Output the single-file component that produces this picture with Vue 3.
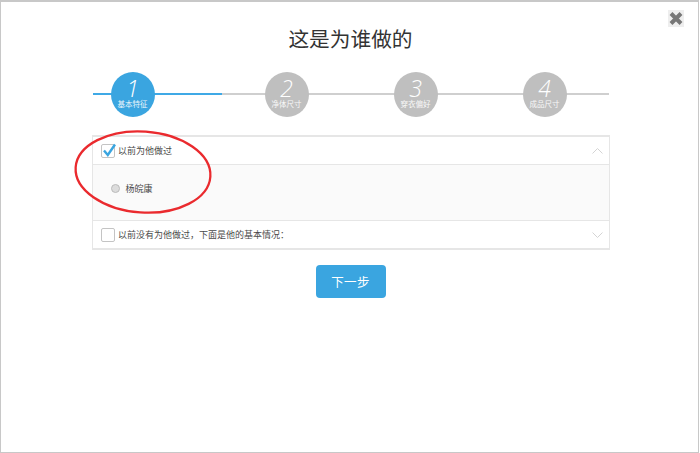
<script setup>
const steps = [
  { n: '1', label: '基本特征', done: true },
  { n: '2', label: '净体尺寸' },
  { n: '3', label: '穿衣偏好' },
  { n: '4', label: '成品尺寸' }
]
</script>

<template>
  <div class="frame">
    <button class="close" aria-label="关闭">
      <svg width="16" height="17" viewBox="0 0 16 17"><path d="M3 3.500 13 13.500M13 3.500 3 13.500" stroke="#777" stroke-width="4" /></svg>
    </button>
    <h1 class="title">这是为谁做的</h1>
    <div class="steps">
      <div v-for="s in steps" :key="s.n" class="step" :class="{ done: s.done }">
        <div class="circle">
          <span class="num">{{ s.n }}</span>
          <span class="label">{{ s.label }}</span>
        </div>
      </div>
    </div>
    <div class="panel">
      <div class="row">
        <span class="check">
          <svg width="16" height="15" viewBox="0 0 16 15"><path d="M3 7.500 6.800 12 14 1.500" fill="none" stroke="#3aa5e0" stroke-width="2.400" /></svg>
        </span>
        <span class="text">以前为他做过</span>
        <svg class="chev" width="11" height="6" viewBox="0 0 11 6"><path d="M.5 5.500 5.500.5l5 5" fill="none" stroke="#d4d4d4" /></svg>
      </div>
      <div class="body">
        <span class="radio"></span>
        <span class="text">杨皖康</span>
      </div>
      <div class="row last">
        <span class="check"></span>
        <span class="text">以前没有为他做过，下面是他的基本情况：</span>
        <svg class="chev" width="11" height="6" viewBox="0 0 11 6"><path d="M.5.5l5 5 5-5" fill="none" stroke="#d4d4d4" /></svg>
      </div>
    </div>
    <button class="next">下一步</button>
    <svg class="ring" width="144" height="90" viewBox="0 0 144 90">
      <ellipse cx="70" cy="44" rx="67.500" ry="40.500" transform="rotate(4 70 44)" fill="none" stroke="#ea2a2e" stroke-width="2.300" />
    </svg>
  </div>
</template>

<style>
html, body { margin: 0; background: #fff; }
</style>

<style scoped>
.frame {
  position: relative;
  box-sizing: border-box;
  width: 699px;
  height: 453px;
  background: #fff;
  border: 1px solid #c8c8c8;
  border-top-width: 2px;
  display: flex;
  flex-direction: column;
  align-items: center;
  font-family: "Noto Sans CJK SC", "Liberation Sans", sans-serif;
  color: #444;
}
.close {
  position: absolute;
  top: 8px;
  right: 14px;
  width: 16px;
  height: 17px;
  padding: 0;
  border: 0;
  background: #eee;
  line-height: 0;
}
.title {
  margin: 21px 0 0 2px;
  font-size: 20.700px;
  line-height: 30px;
  font-weight: 400;
  color: #333;
}
.steps {
  display: flex;
  margin-top: 19px;
  margin-left: 2px;
}
.step {
  width: 129px;
  height: 45px;
  position: relative;
  background: linear-gradient(#cfcfcf, #cfcfcf) 0 21px / 100% 2px no-repeat;
}
.step.done {
  background-image: linear-gradient(#3fa9e6, #3fa9e6);
}
.circle {
  position: absolute;
  left: 43px;
  top: 0;
  width: 44px;
  height: 45px;
  border-radius: 50%;
  background: #bfbfbf;
  color: #fff;
  display: flex;
  flex-direction: column;
  align-items: center;
}
.done .circle { left: 18px; background: #3aa5e0; }
.num {
  font-family: "Open Sans", "Liberation Sans", sans-serif;
  font-style: italic;
  font-weight: 300;
  font-size: 23px;
  line-height: 18px;
  margin-top: 7px;
}
.label {
  font-size: 7.500px;
  line-height: 8px;
  margin-top: 3px;
  white-space: nowrap;
  opacity: .9;
}
.panel {
  box-sizing: border-box;
  width: 518px;
  margin: 18px 0 0 2px;
  border: 1px solid #e6e6e6;
  border-top-width: 2px;
  border-bottom-width: 2px;
  font-size: 9px;
}
.row {
  display: flex;
  align-items: center;
  height: 27px;
  padding: 0 6px 0 8px;
  border-bottom: 1px solid #e6e6e6;
}
.row.last { border-bottom: 0; border-top: 1px solid #e6e6e6; }
.check {
  box-sizing: border-box;
  width: 14px;
  height: 14px;
  border: 1px solid #c4c4c4;
  border-radius: 2px;
  background: #fff;
  margin-right: 3.500px;
  line-height: 0;
}
.check svg { margin: -2px 0 0 -1px; }
.text { line-height: 14px; color: #4a4a4a; }
.chev { margin-left: auto; }
.body {
  height: 55px;
  display: flex;
  align-items: center;
  padding: 0 0 8px 18.500px;
  background: #fafafa;
  box-sizing: border-box;
}
.radio {
  box-sizing: border-box;
  width: 9px;
  height: 9px;
  border-radius: 50%;
  border: 1px solid #bbb;
  background: #dcdcdc;
  margin-right: 5.500px;
}
.next {
  width: 70px;
  height: 33px;
  margin: 15px 0 0 2px;
  border: 0;
  border-radius: 4px;
  background: #3aa5e0;
  color: #fff;
  font-family: inherit;
  font-size: 12.500px;
  letter-spacing: .3px;
}
.ring {
  position: absolute;
  left: 72px;
  top: 126px;
}
</style>
